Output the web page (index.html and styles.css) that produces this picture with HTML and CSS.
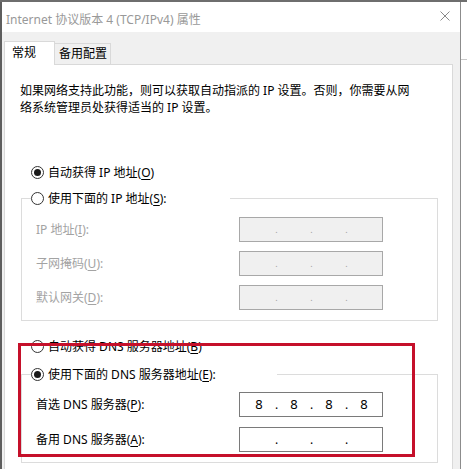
FILE: index.html
```html
<!DOCTYPE html>
<html lang="zh-CN">
<head>
<meta charset="utf-8">
<title>Internet 协议版本 4 (TCP/IPv4) 属性</title>
<link rel="stylesheet" href="styles.css">
</head>
<body>
<div class="screen">
  <div class="edge-left"></div>
  <div class="window">
    <div class="titlebar">
      <span class="title">Internet 协议版本 4 (TCP/IPv4) 属性</span>
      <svg class="close" width="10" height="10" viewBox="0 0 10 10"><path d="M0.5 0.5L9.5 9.5M9.5 0.5L0.5 9.5" stroke="#8a8a8a" stroke-width="1" fill="none"/></svg>
    </div>
    <div class="body">
      <div class="tabs">
        <div class="tab active">常规</div>
        <div class="tab inactive">备用配置</div>
      </div>
      <div class="panel">
        <p class="desc">如果网络支持此功能，则可以获取自动指派的 IP 设置。否则，你需要从网<br>络系统管理员处获得适当的 IP 设置。</p>

        <div class="radio-row first"><span class="radio checked"></span><span>自动获得 IP 地址(<u>O</u>)</span></div>

        <fieldset class="group group-ip">
          <legend class="legend-ip"><span class="radio-row"><span class="radio"></span><span>使用下面的 IP 地址(<u>S</u>):</span></span></legend>
          <div class="grid">
            <span class="label disabled">IP 地址(<u>I</u>):</span>
            <div class="ipbox disabled"><span class="oct"></span><span class="dot">.</span><span class="oct"></span><span class="dot">.</span><span class="oct"></span><span class="dot">.</span><span class="oct"></span></div>
            <span class="label disabled">子网掩码(<u>U</u>):</span>
            <div class="ipbox disabled"><span class="oct"></span><span class="dot">.</span><span class="oct"></span><span class="dot">.</span><span class="oct"></span><span class="dot">.</span><span class="oct"></span></div>
            <span class="label disabled">默认网关(<u>D</u>):</span>
            <div class="ipbox disabled"><span class="oct"></span><span class="dot">.</span><span class="oct"></span><span class="dot">.</span><span class="oct"></span><span class="dot">.</span><span class="oct"></span></div>
          </div>
        </fieldset>

        <div class="radio-row dns-auto"><span class="radio"></span><span>自动获得 DNS 服务器地址(<u>B</u>)</span></div>

        <fieldset class="group group-dns">
          <legend class="legend-dns"><span class="radio-row"><span class="radio checked"></span><span>使用下面的 DNS 服务器地址(<u>E</u>):</span></span></legend>
          <div class="grid grid-dns">
            <span class="label">首选 DNS 服务器(<u>P</u>):</span>
            <div class="ipbox"><span class="oct">8</span><span class="dot">.</span><span class="oct">8</span><span class="dot">.</span><span class="oct">8</span><span class="dot">.</span><span class="oct">8</span></div>
            <span class="label">备用 DNS 服务器(<u>A</u>):</span>
            <div class="ipbox"><span class="oct"></span><span class="dot">.</span><span class="oct"></span><span class="dot">.</span><span class="oct"></span><span class="dot">.</span><span class="oct"></span></div>
          </div>
        </fieldset>
      </div>
    </div>
  </div>
  <div class="outside"><div class="outside-line"></div></div>
  <div class="highlight"></div>
</div>
</body>
</html>
```
FILE: styles.css
```css
* { box-sizing: border-box; }
html, body { margin: 0; padding: 0; background: #fff; }
body {
  font-family: "Noto Sans", "Noto Sans CJK SC", sans-serif;
  font-size: 12px;
  color: #000;
}
.screen {
  position: relative;
  width: 467px;
  height: 469px;
  overflow: hidden;
  display: flex;
  border-top: 2px solid #6e6e6e;
  background: #fff;
}
.edge-left { width: 2px; flex: none; background: #5e5e5e; }
.window {
  width: 459px;
  flex: none;
  display: flex;
  flex-direction: column;
  border-right: 1px solid #8c8c8c;
}
.outside { flex: 1; }
.outside-line { margin-top: 57px; border-top: 1px solid #c9c9c9; }

.titlebar {
  height: 30px;
  flex: none;
  background: #fff;
  display: flex;
  justify-content: space-between;
  align-items: flex-start;
  padding: 0 10px 0 4px;
}
.title { color: #999; line-height: 18px; margin-top: 9px; white-space: nowrap; }
.close { margin-top: 9px; }

.body {
  flex: 1;
  background: #f0f0f0;
  padding: 9px 7px 0 2px;
  display: flex;
  flex-direction: column;
}
.tabs {
  display: flex;
  align-items: flex-end;
  position: relative;
  z-index: 1;
  margin-bottom: -1px;
}
.tab { line-height: 18px; white-space: nowrap; }
.tab.active {
  height: 24px;
  background: #fff;
  border: 1px solid #d9d9d9;
  border-bottom: none;
  padding: 2px 18px 0 7px;
}
.tab.inactive {
  height: 21px;
  margin-bottom: 1px;
  background: #f0f0f0;
  border: 1px solid #d9d9d9;
  border-left: none;
  border-bottom: none;
  padding: 1px 3px 0 4px;
}
.panel {
  flex: 1;
  background: #fff;
  border: 1px solid #d9d9d9;
  border-bottom: none;
  display: flex;
  flex-direction: column;
}
.desc {
  margin: 17px 0 0 15px;
  line-height: 17px;
  white-space: nowrap;
}
.radio-row {
  display: flex;
  align-items: center;
  height: 20px;
  line-height: 17px;
  white-space: nowrap;
}
.radio-row.first { margin: 46px 0 0 26px; }
.radio-row.dns-auto { margin: 15px 0 0 26px; }
.radio {
  width: 13px;
  height: 13px;
  border: 1px solid #333;
  border-radius: 50%;
  margin-right: 4px;
  flex: none;
  display: flex;
  align-items: center;
  justify-content: center;
  background: #fff;
}
.radio.checked::after {
  content: "";
  width: 7px;
  height: 7px;
  border-radius: 50%;
  background: #1a1a1a;
}
u { text-decoration-thickness: 1px; text-underline-offset: 2px; }

.group {
  margin: 6px 14px 0 16px;
  border: 1px solid #dcdcdc;
  padding: 9px 0 10px 14px;
  min-width: 0;
}
.group-dns { margin-top: 8px; padding-top: 8px; }
legend { padding: 0; margin-left: -5px; }
.legend-ip { width: 199px; }
.legend-dns { width: 246px; }
.legend-ip .radio-row, .legend-dns .radio-row { background: #fff; }

.grid {
  display: grid;
  grid-template-columns: 203px 144px;
  row-gap: 9px;
  align-items: center;
}
.grid-dns { row-gap: 10px; }
.label { line-height: 17px; white-space: nowrap; }
.label.disabled { color: #a3a3a3; }

.ipbox {
  height: 25px;
  border: 1px solid #7a7a7a;
  background: #fff;
  display: flex;
  padding-left: 5px;
  line-height: 23px;
}
.ipbox.disabled { background: #f0f0f0; border-color: #a8a8a8; color: #a0a0a0; }
.oct { width: 28px; text-align: center; font-size: 13px; }
.dot { width: 7px; text-align: center; }
.ipbox.disabled .dot { font-size: 9px; }

.highlight {
  position: absolute;
  left: 18px;
  top: 341px;
  width: 397px;
  height: 114px;
  border: 3px solid #c5102a;
  z-index: 5;
}
```
